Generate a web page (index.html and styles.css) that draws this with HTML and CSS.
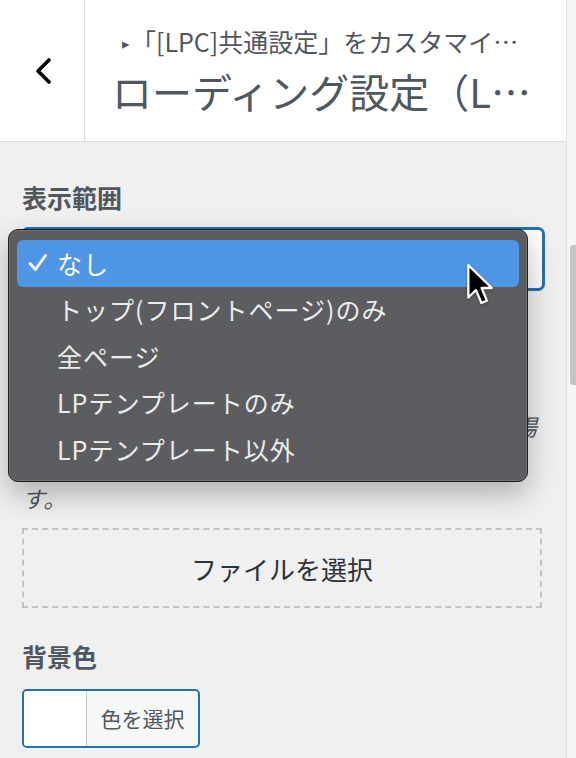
FILE: index.html
```html
<!DOCTYPE html>
<html lang="ja">
<head>
<meta charset="UTF-8">
<meta name="viewport" content="width=device-width, initial-scale=1.0">
<title>ローディング設定</title>
<link rel="stylesheet" href="styles.css">
</head>
<body>

<div class="sidebar">
    <div class="main">
        <div class="panel-head">
            <button class="back-btn" aria-label="戻る">
                <svg width="24" height="30" viewBox="0 0 24 30"><path d="M17 4 L6 15 L17 26" fill="none" stroke="#000" stroke-width="3.6" stroke-linecap="round" stroke-linejoin="round"/></svg>
            </button>
            <div class="head-title">
                <span class="crumb"><span class="crumb-arrow">&#9656;</span>「[LPC]共通設定」をカスタマイ…</span>
                <h3 class="title">ローディング設定（L…</h3>
            </div>
        </div>

        <div class="panel-body">
            <div class="control">
                <span class="control-label">表示範囲</span>
                <div class="select-box">なし</div>
            </div>

            <div class="control control-image">
                <span class="control-label">ローディング画像</span>
                <p class="description">ローディング中の画像を設定します。未設定の場<br>合はデフォルトのアニメーションが表示されま<br>す。</p>
                <button class="file-btn">ファイルを選択</button>
            </div>

            <div class="control control-color">
                <span class="control-label">背景色</span>
                <button class="color-btn">
                    <span class="swatch"></span>
                    <span class="color-text">色を選択</span>
                </button>
            </div>
        </div>
    </div>

    <div class="scrollbar">
        <div class="thumb"></div>
    </div>

    <!-- native select menu, opened -->
    <ul class="select-menu">
        <li class="item selected">
            <span class="check"><svg width="22" height="20" viewBox="0 0 22 20"><path d="M3 10.5 L8.5 16.5 L18.5 2.5" fill="none" stroke="#fff" stroke-width="2.8" stroke-linecap="round" stroke-linejoin="round"/></svg></span>なし
        </li>
        <li class="item"><span class="check"></span>トップ(フロントページ)のみ</li>
        <li class="item"><span class="check"></span>全ページ</li>
        <li class="item"><span class="check"></span>LPテンプレートのみ</li>
        <li class="item"><span class="check"></span>LPテンプレート以外</li>
    </ul>

    <svg class="cursor" width="32" height="46" viewBox="0 0 22 32">
        <path d="M1.5 1.5 L1.5 24 L6.8 18.8 L10.6 27.8 L14.4 26.2 L10.7 17.4 L17.8 17.4 Z" fill="#000" stroke="#fff" stroke-width="1.6" stroke-linejoin="round"/>
    </svg>
</div>

</body>
</html>
```

FILE: styles.css
```css
html, body {
    margin: 0;
    padding: 0;
}
body {
    font-family: "Noto Sans CJK JP", "Noto Sans", sans-serif;
    background-color: #f0f0f1;
    color: #50575e;
}
.sidebar {
    position: relative;
    display: flex;
    width: 576px;
    height: 758px;
    overflow: hidden;
}
.main {
    flex: 1;
    display: flex;
    flex-direction: column;
}
.panel-head {
    display: flex;
    height: 141px;
    background-color: #fff;
    border-bottom: 1px solid #dcdcde;
}
.back-btn {
    width: 85px;
    border: none;
    border-right: 1px solid #dcdcde;
    background: #fff;
    padding: 0 0 0 4px;
    display: flex;
    align-items: center;
    justify-content: center;
}
.head-title {
    flex: 1;
    padding: 21px 0 0 27px;
    min-width: 0;
}
.crumb {
    display: block;
    padding-left: 10px;
    font-size: 25px;
    line-height: 40px;
    white-space: nowrap;
}
.crumb-arrow {
    font-size: 15px;
    vertical-align: 3px;
    margin-right: 1px;
}
.title {
    margin: 0;
    font-size: 40px;
    font-weight: normal;
    line-height: 56px;
    white-space: nowrap;
}
.panel-body {
    flex: 1;
    padding: 37px 24px 0 22px;
}
.control-label {
    display: block;
    font-size: 25px;
    font-weight: bold;
    line-height: 36px;
    color: #50575e;
}
.select-box {
    margin: 13px -2px 0 0;
    height: 58px;
    border: 2px solid #2271b1;
    box-shadow: 0 0 0 1px #2271b1;
    border-radius: 6px;
    background: #fff;
    font-size: 23px;
    line-height: 58px;
    padding-left: 14px;
}
.control-image {
    margin-top: 40px;
}
.description {
    margin: 42px 0 12px;
    font-size: 23px;
    line-height: 36px;
    letter-spacing: 0.6px;
    font-style: italic;
    white-space: nowrap;
}
.file-btn {
    display: block;
    width: 100%;
    height: 80px;
    border: 2px dashed #c3c4c7;
    background: transparent;
    font-family: inherit;
    font-size: 26px;
    color: #2c3338;
}
.control-color {
    margin-top: 30px;
}
.color-btn {
    margin-top: 15px;
    display: flex;
    width: 178px;
    height: 59px;
    padding: 0;
    border: 2px solid #2271b1;
    border-radius: 5px;
    overflow: hidden;
    background: #f6f7f7;
    font-family: inherit;
}
.swatch {
    width: 62px;
    height: 100%;
    background: #fff;
    border-right: 1px solid #c3c4c7;
}
.color-text {
    flex: 1;
    font-size: 21px;
    line-height: 55px;
    color: #50575e;
    text-align: center;
}
.scrollbar {
    width: 9px;
    background: #f5f5f5;
    border-left: 1px solid #e2e2e2;
    padding-top: 245px;
}
.thumb {
    margin-left: 3px;
    height: 140px;
    background: #c4c4c4;
    border-radius: 3px 0 0 3px;
}
.select-menu {
    position: absolute;
    left: 8px;
    top: 229px;
    width: 502px;
    height: 232px;
    margin: 0;
    padding: 10px 8px 9px;
    list-style: none;
    background: #5b5d60;
    border: 1px solid #1f1f1f;
    border-radius: 10px;
    box-shadow: inset 0 0 0 1px rgba(255,255,255,0.12), 0 12px 30px rgba(0,0,0,0.28);
    color: #ececec;
    font-size: 25px;
    letter-spacing: 1px;
}
.item {
    display: flex;
    align-items: center;
    height: 46.5px;
    padding-left: 10px;
    border-radius: 6px;
    line-height: 1;
}
.item.selected {
    background: #4f96e6;
    color: #fff;
}
.check {
    display: flex;
    width: 30px;
}
.cursor {
    position: absolute;
    left: 466px;
    top: 263px;
    filter: drop-shadow(0 1px 1.5px rgba(0,0,0,0.35));
}
```
